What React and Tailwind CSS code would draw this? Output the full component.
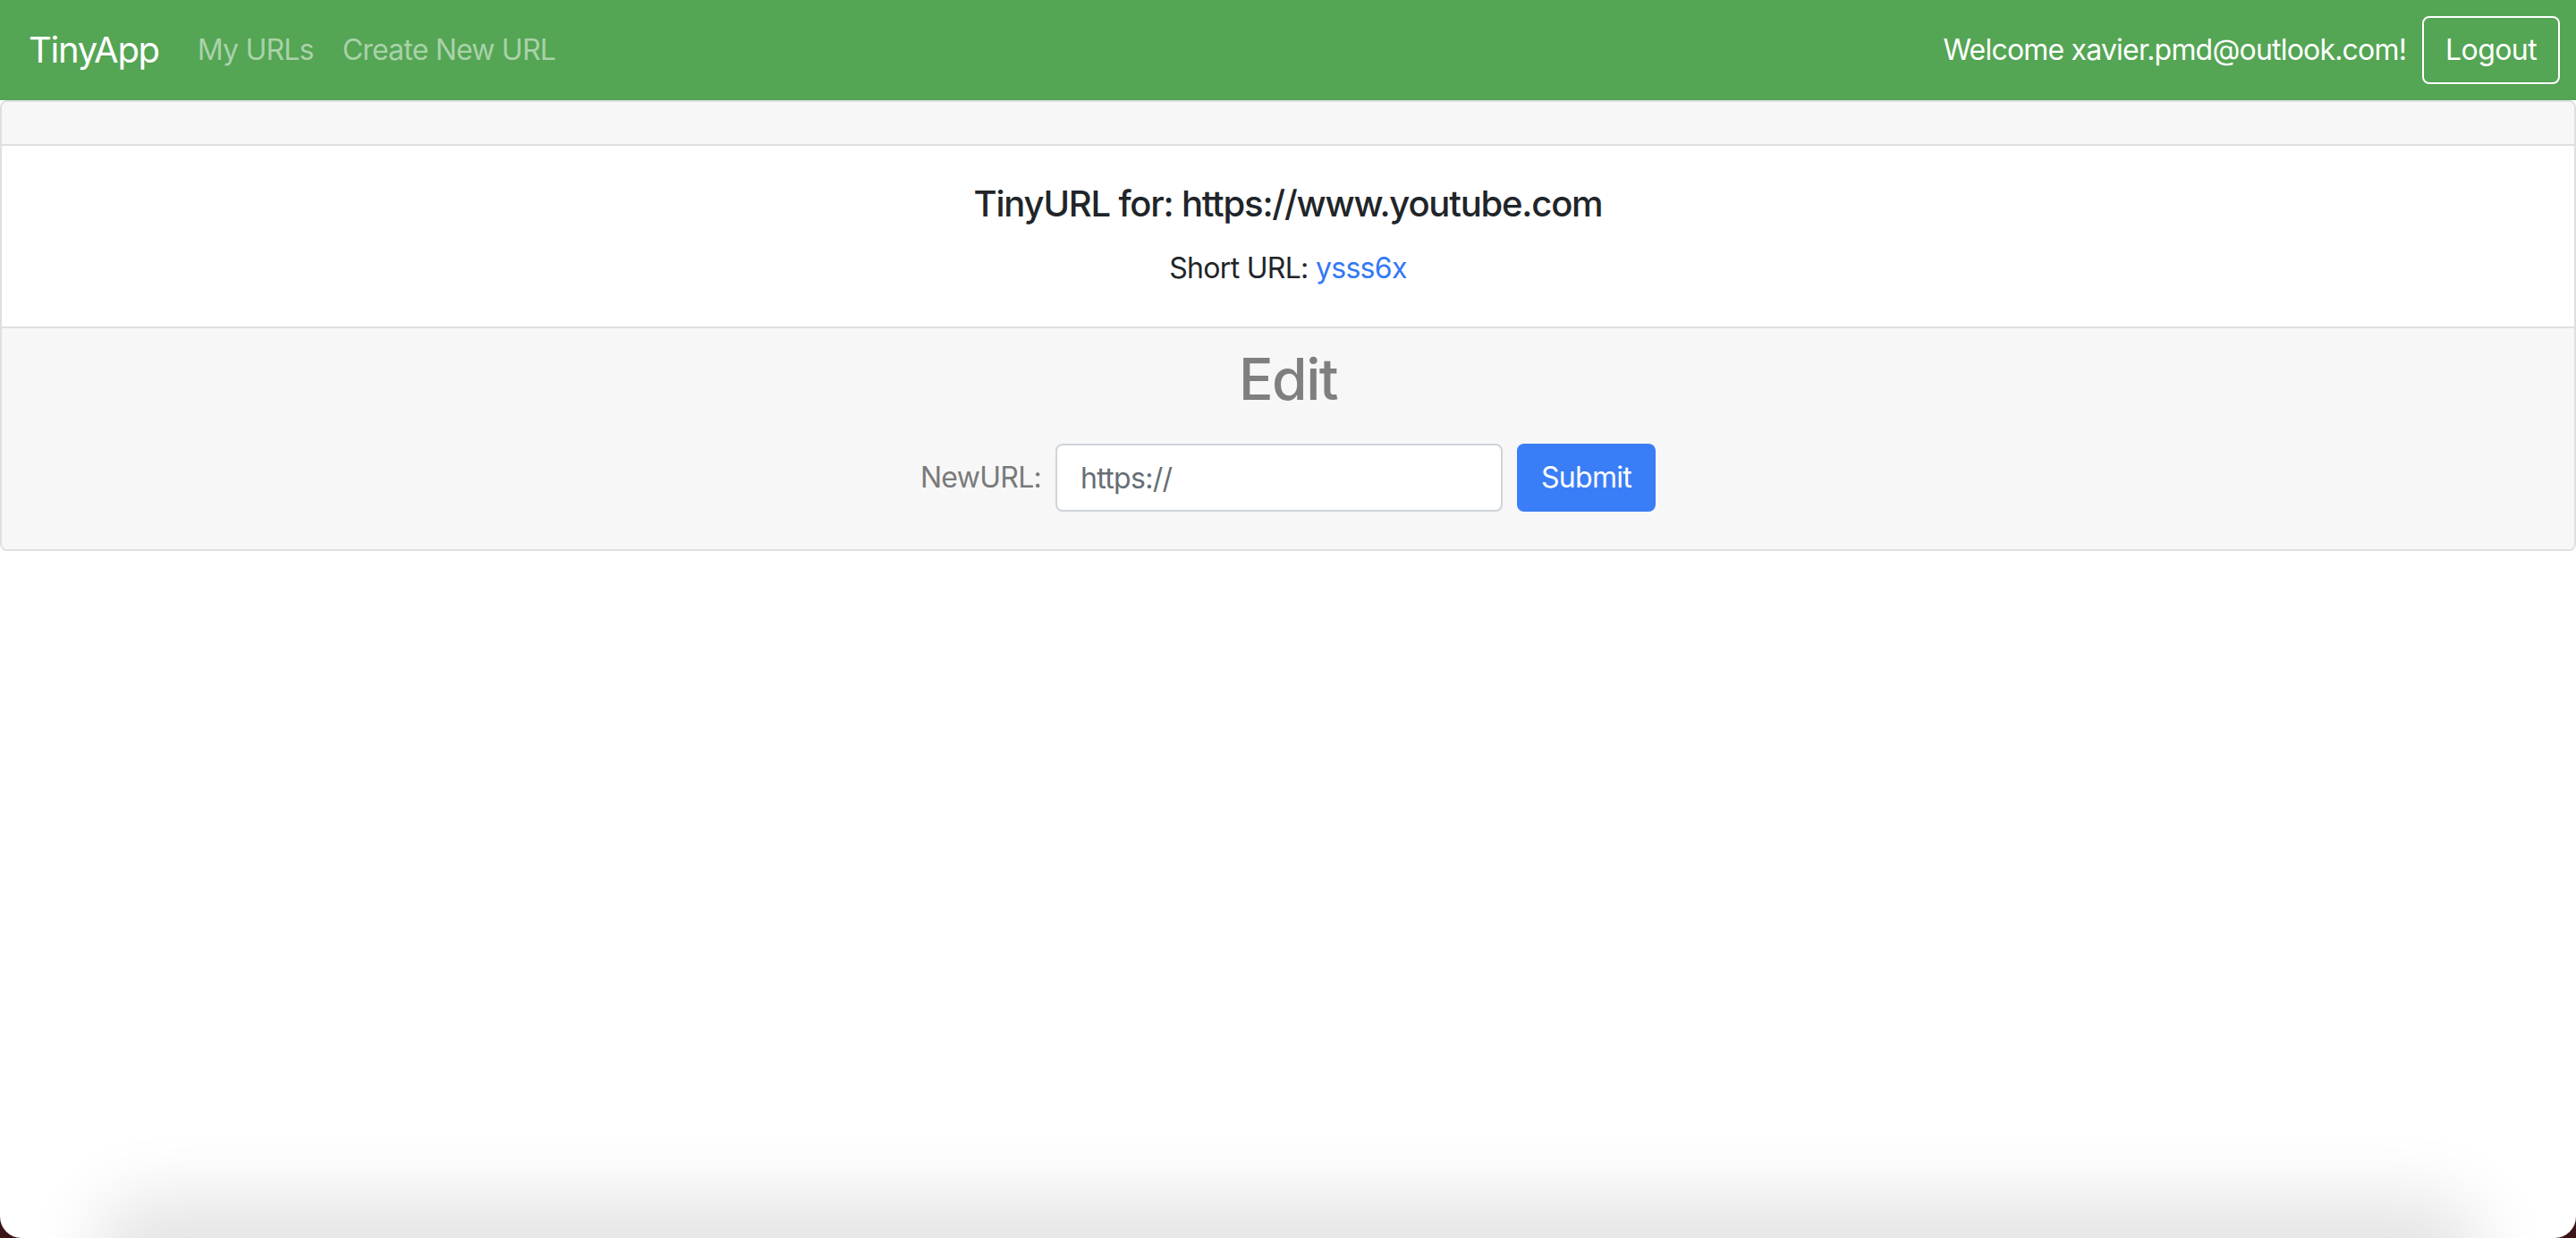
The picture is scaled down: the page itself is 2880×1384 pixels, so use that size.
import React from 'react';

const font = { fontFamily: 'Inter, "Liberation Sans", sans-serif' };

function Navbar() {
    return (
        <nav className="h-[112px] shrink-0 bg-[#54a554] flex items-center pl-[32px] pr-[18px]">
            <a className="text-[40px] leading-[60px] text-white mr-[27px] tracking-[-1.3px]">TinyApp</a>
            <a className="text-[32px] leading-[48px] px-[16px] text-[#a9d2a9] tracking-[-0.8px]">My URLs</a>
            <a className="text-[32px] leading-[48px] px-[16px] text-[#a9d2a9] tracking-[-0.8px]">Create New URL</a>
            <div className="ml-auto flex items-center gap-[18px]">
                <span className="text-[32px] leading-[48px] text-white tracking-[-0.8px]">Welcome xavier.pmd@outlook.com!</span>
                <button className="h-[76px] px-[24px] border-2 border-white rounded-[8px] text-[32px] text-white tracking-[-0.6px]">Logout</button>
            </div>
        </nav>
    );
}

export default function App() {
    return (
        <div className="h-[1384px] w-full bg-[#3a1418]" style={font}>
            <div className="relative h-full bg-white rounded-b-[24px] overflow-hidden flex flex-col">
                <Navbar />

                <div className="border-2 border-[#dfdfdf] rounded-[8px] overflow-hidden">
                    <div className="h-[49px] bg-[#f7f7f7] border-b-2 border-[#dfdfdf]"></div>

                    <div className="bg-white pt-[41px] pb-[41px] text-center text-[#212529]">
                        <h5 className="text-[40px] leading-[48px] font-medium mb-[24px] tracking-[-1.2px]">TinyURL for: https://www.youtube.com</h5>
                        <p className="text-[32px] leading-[48px] tracking-[-0.7px]">
                            Short URL: <a className="text-[#3478f6]">ysss6x</a>
                        </p>
                    </div>

                    <div className="bg-[#f7f7f7] border-t-2 border-[#dfdfdf] pt-[18px] pb-[42px] text-center">
                        <h2 className="text-[64px] leading-[77px] font-medium text-[#7f7f7f] mb-[34px] tracking-[-1.5px]">Edit</h2>
                        <form className="flex items-center justify-center gap-[16px]">
                            <label className="text-[32px] text-[#7a7a7a] tracking-[-0.7px]">NewURL:</label>
                            <input
                                type="text"
                                defaultValue="https://"
                                className="w-[500px] h-[76px] px-[26px] bg-white border-2 border-[#ced4da] rounded-[8px] text-[32px] text-[#676e75] outline-none tracking-[-0.7px]"
                                style={font}
                            />
                            <button type="button" className="h-[76px] w-[155px] bg-[#3a7ef7] rounded-[8px] text-[32px] text-white tracking-[-0.7px]">Submit</button>
                        </form>
                    </div>
                </div>

                <div className="absolute left-[150px] right-[150px] -bottom-[40px] h-[40px] rounded-full shadow-[0_0_80px_45px_rgba(0,0,0,0.11)]"></div>
            </div>
        </div>
    );
}
